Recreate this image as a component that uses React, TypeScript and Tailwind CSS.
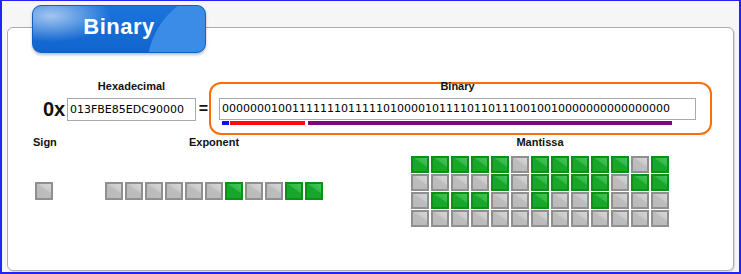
import React from "react"

const HEX = "013FBE85EDC90000"
const BITS = HEX.split("")
  .map(h => parseInt(h, 16).toString(2).padStart(4, "0"))
  .join("")

const sign = BITS.slice(0, 1)
const exponent = BITS.slice(1, 12)
const mantissa = BITS.slice(12)

const label = "font-['Liberation_Sans',Arial,sans-serif] text-[11px] leading-[13px] font-bold text-[#111]"
const field =
  "h-[22px] border border-[#a9a9a9] bg-white px-[2px] font-['DejaVu_Sans',Verdana,sans-serif] text-[11px] leading-[20px] text-black whitespace-nowrap overflow-hidden"

function Bit({ on, tall = true }: { on: boolean; tall?: boolean }) {
  return (
    <div
      className={
        (tall ? "h-[18px] " : "h-[17px] ") +
        "w-[18px] border-2 " +
        (on
          ? "border-[#0e8f16] bg-[image:linear-gradient(215deg,#47c35a_0%,#33b848_38%,#17a82b_40%,#16a62a_100%)]"
          : "border-[#8f8f8f] bg-[image:linear-gradient(215deg,#d6d6d6_0%,#cacaca_38%,#bdbdbd_40%,#bababa_100%)]")
      }
    />
  )
}

export default function App() {
  return (
    <div className="relative w-[741px] h-[274px] overflow-hidden bg-[#f6f6f6] border-l-2 border-r-2 border-t border-b-2 border-[#2323f5]">
      {/* tab */}
      <div className="absolute left-[30px] top-[4px] w-[174px] h-[48px] rounded-[9px] border border-[#0f5fc6] shadow-[0_2px_3px_rgba(0,0,0,0.25)] bg-[image:radial-gradient(ellipse_60px_26px_at_18px_10px,rgba(255,255,255,0.6),rgba(255,255,255,0)_100%),radial-gradient(circle_at_112%_135%,#3a8ce6_0,#3a8ce6_78px,rgba(0,0,0,0)_79px),linear-gradient(#1b74db,#1164cf)] flex items-center justify-center">
        <span className="font-['Liberation_Sans',Arial,sans-serif] font-bold text-[22px] leading-none tracking-[0.5px] text-white -mt-[4px]">
          Binary
        </span>
      </div>

      {/* panel */}
      <div className="ml-[5px] mt-[26px] w-[727px] h-[244px] rounded-[6px] border border-[#acacac] bg-white shadow-[1px_1px_1px_rgba(0,0,0,0.12)] pt-[52px]">
        {/* conversion row */}
        <div className="flex items-start pl-[35px]">
          <div className="w-[24px] mt-[18px] font-['Liberation_Sans',Arial,sans-serif] font-bold text-[20px] leading-[23px] text-[#111]">
            0x
          </div>
          <div className="flex flex-col w-[129px]">
            <div className={label + " text-center"}>Hexadecimal</div>
            <div className={field + " mt-[5px] h-[23px] leading-[21px]"}>{HEX}</div>
          </div>
          <div className="w-[13px] mt-[19px] text-right pr-[1px] font-['Liberation_Sans',Arial,sans-serif] font-bold text-[16px] leading-[20px] text-[#111]">
            =
          </div>
          <div className="mt-[2px] w-[503px] h-[53px] rounded-[12px] border-2 border-[#ff6c0a] pl-[8px]">
            <div className="w-[477px]">
              <div className={label + " -mt-[4px] text-center"}>Binary</div>
              <div className={field + " mt-[5px]"}>{BITS}</div>
              <div className="flex mt-[1px] pl-[3px] h-[4px]">
                <div className="w-[7px] bg-[#1010f0]" />
                <div className="w-[75px] ml-[1px] bg-[#ff0a0a]" />
                <div className="w-[364px] ml-[3px] bg-[#820084]" />
              </div>
            </div>
          </div>
        </div>

        {/* bits row */}
        <div className="flex items-start pl-[25px] mt-[1px]">
          <div className="flex flex-col w-[22px]">
            <div className={label}>Sign</div>
            <div className="mt-[33px] ml-[2px] flex">
              {sign.split("").map((b, i) => (
                <Bit key={i} on={b === "1"} />
              ))}
            </div>
          </div>
          <div className="flex flex-col w-[218px] ml-[50px]">
            <div className={label + " text-center"}>Exponent</div>
            <div className="mt-[33px] flex gap-[2px]">
              {exponent.split("").map((b, i) => (
                <Bit key={i} on={b === "1"} />
              ))}
            </div>
          </div>
          <div className="flex flex-col w-[258px] ml-[88px]">
            <div className={label + " text-center"}>Mantissa</div>
            <div className="mt-[7px] grid grid-cols-[repeat(13,18px)] gap-x-[2px] gap-y-[1px]">
              {mantissa.split("").map((b, i) => (
                <Bit key={i} on={b === "1"} tall={false} />
              ))}
            </div>
          </div>
        </div>
      </div>
    </div>
  )
}
